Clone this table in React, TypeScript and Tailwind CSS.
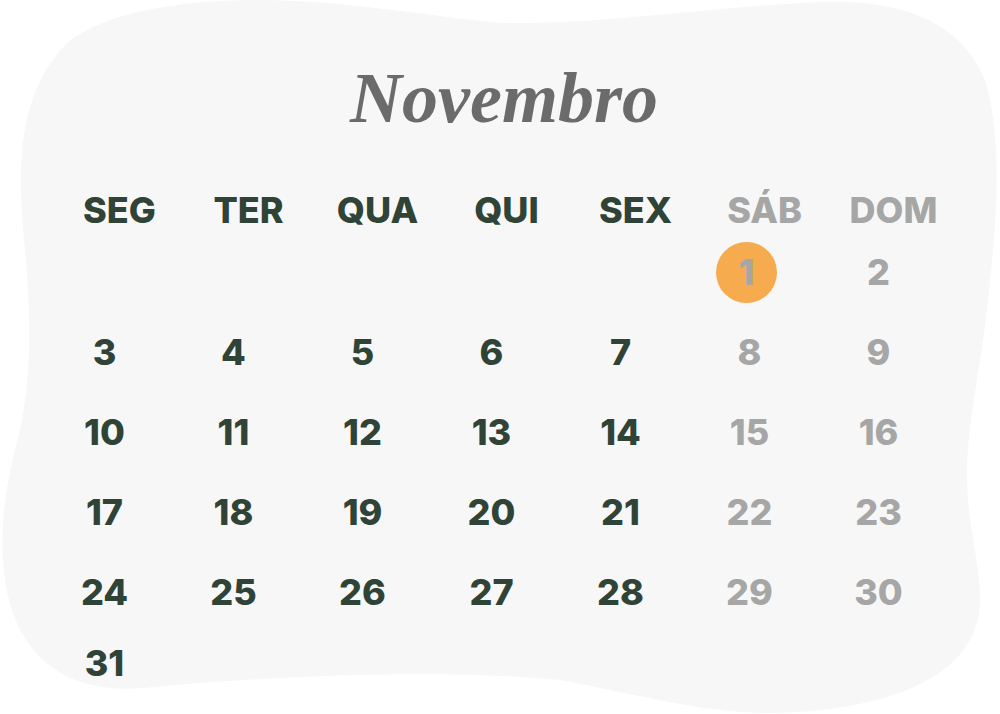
const WEEKDAYS = [
  { label: "SEG", weekend: false },
  { label: "TER", weekend: false },
  { label: "QUA", weekend: false },
  { label: "QUI", weekend: false },
  { label: "SEX", weekend: false },
  { label: "SÁB", weekend: true },
  { label: "DOM", weekend: true },
];

// novembro começa num sábado -> 5 casas vazias
const LEADING_BLANKS = 5;
const DAYS_IN_MONTH = 30 + 1;
const HIGHLIGHTED_DAY = 1;

const buildWeeks = () => {
  const cells: (number | null)[] = [
    ...Array.from({ length: LEADING_BLANKS }, () => null),
    ...Array.from({ length: DAYS_IN_MONTH }, (_, i) => i + 1),
  ];
  const weeks: (number | null)[][] = [];
  for (let i = 0; i < cells.length; i += 7) {
    weeks.push(cells.slice(i, i + 7));
  }
  return weeks;
};

const Blob = () => (
  <svg
    className="absolute inset-0 h-full w-full"
    viewBox="0 0 1000 714"
    preserveAspectRatio="none"
    aria-hidden
  >
    <path
      fill="#f7f7f7"
      d="M 24 240
         C 18 170, 16 95, 67 43
         C 105 12, 180 0, 260 0
         C 340 0, 420 15, 500 23
         C 600 25, 700 8, 820 2
         C 900 0, 960 20, 985 80
         C 1003 140, 997 220, 988 300
         C 982 360, 968 420, 967 470
         C 966 520, 980 560, 980 600
         C 980 680, 880 712, 767 713
         C 700 712, 640 695, 560 680
         C 460 670, 300 673, 143 688
         C 60 695, 15 650, 5 580
         C -3 520, 10 470, 20 430
         C 30 380, 33 330, 24 240 Z"
    />
  </svg>
);

const DayCell = ({ day, weekend }: { day: number | null; weekend: boolean }) => {
  if (day === null) {
    return <div />;
  }

  const isHighlighted = day === HIGHLIGHTED_DAY;

  return (
    <div className="flex items-center justify-center">
      <span
        className={`flex h-[61px] w-[61px] items-center justify-center rounded-full leading-none ${
          isHighlighted ? "mr-[6px] bg-[#f7ab4f]" : ""
        } ${weekend ? "text-[#a6a6a6]" : "text-[#2f4337]"}`}
      >
        {day}
      </span>
    </div>
  );
};

export default function App() {
  const weeks = buildWeeks();

  return (
    <div className="relative h-[714px] w-[1000px] overflow-hidden bg-white">
      <Blob />
      <div className="relative flex flex-col">
        {/* título do mês */}
        <h1 className="mt-[62px] pl-[8px] text-center text-[72px] leading-none font-bold italic text-[#6b6b6b] [font-family:'Liberation_Serif',serif]">
          Novembro
        </h1>

        <div className="ml-[40px] w-[903px] text-[36px] font-extrabold [font-family:Inter,'Liberation_Sans',sans-serif]">
          {/* cabeçalho dos dias */}
          <div className="mt-[56px] mb-[2px] grid h-[40px] grid-cols-7 items-center">
            {WEEKDAYS.map(({ label, weekend }) => (
              <div
                key={label}
                className={`pl-[30px] text-center leading-none ${
                  weekend ? "text-[#a6a6a6]" : "text-[#2f4337]"
                }`}
              >
                {label}
              </div>
            ))}
          </div>

          {/* semanas */}
          {weeks.map((week, rowIndex) => (
            <div
              key={rowIndex}
              className={`grid grid-cols-7 items-center ${
                rowIndex === weeks.length - 1 ? "h-[62px]" : "h-[80px]"
              }`}
            >
              {week.map((day, colIndex) => (
                <DayCell
                  key={colIndex}
                  day={day}
                  weekend={colIndex >= 5}
                />
              ))}
            </div>
          ))}
        </div>
      </div>
    </div>
  );
}
